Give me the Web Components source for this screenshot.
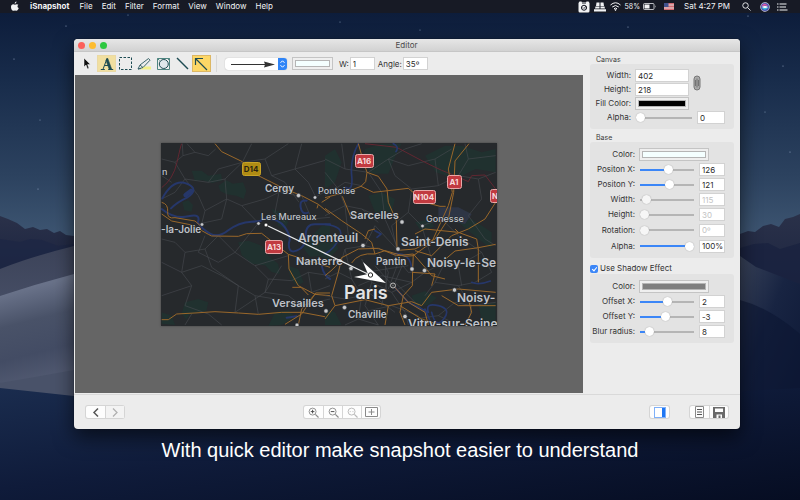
<!DOCTYPE html>
<html lang="en">
<head>
<meta charset="utf-8">
<title>iSnapshot Editor</title>
<style>
body { margin: 0; background: #0b1630; font-family: Inter, "Liberation Sans", sans-serif; }
</style>
</head>
<body>
<snap-desktop>
  <menu-bar slot="menu"></menu-bar>
  <editor-window heading="Editor">
    <tool-bar slot="tools"></tool-bar>
    <map-canvas slot="canvas"></map-canvas>
    <inspector-panel slot="inspector"></inspector-panel>
    <bottom-bar slot="footer"></bottom-bar>
  </editor-window>
  <span slot="caption">With quick editor make snapshot easier to understand</span>
</snap-desktop>

<script>
const define = (name, html, setup) => {
  const template = document.createElement('template');
  template.innerHTML = html;
  customElements.define(name, class extends HTMLElement {
    constructor() {
      super();
      this.attachShadow({ mode: 'open' }).append(template.content.cloneNode(true));
    }
    connectedCallback() { if (setup) setup(this, this.shadowRoot); }
  });
};

define('snap-wallpaper', `
<style>
:host { display: block; }
svg { display: block; width: 100%; height: 100%; }
</style>
<svg viewBox="0 0 800 500" preserveAspectRatio="none" aria-hidden="true">
  <defs>
    <linearGradient id="sky" x2="0" y2="1">
      <stop offset="0" stop-color="#0b1a38"/><stop offset=".3" stop-color="#182c4b"/>
      <stop offset=".65" stop-color="#2c425f"/><stop offset="1" stop-color="#47607c"/>
    </linearGradient>
    <linearGradient id="peak" x2="0" y2="1">
      <stop offset="0" stop-color="#2a3149"/><stop offset="1" stop-color="#141d3c"/>
    </linearGradient>
    <linearGradient id="duneA" x2="0" y2="1">
      <stop offset="0" stop-color="#3c4359"/><stop offset="1" stop-color="#565f78"/>
    </linearGradient>
    <linearGradient id="duneB" gradientUnits="userSpaceOnUse" x1="40" y1="285" x2="66" y2="390">
      <stop offset="0" stop-color="#697289"/><stop offset=".3" stop-color="#495268"/>
      <stop offset=".6" stop-color="#434c64"/><stop offset="1" stop-color="#596178"/>
    </linearGradient>
    <linearGradient id="right" x2=".6" y2="1">
      <stop offset="0" stop-color="#3a445b"/><stop offset=".4" stop-color="#182442"/><stop offset="1" stop-color="#0b1633"/>
    </linearGradient>
    <linearGradient id="ground" x2="1" y2="1">
      <stop offset="0" stop-color="#1a2c4e"/><stop offset=".45" stop-color="#0f1b3a"/><stop offset="1" stop-color="#060d22"/>
    </linearGradient>
  </defs>
  <rect width="800" height="270" fill="url(#sky)"/>
  <g fill="#8fa3c0">
    <circle cx="66" cy="26" r=".6"/><circle cx="14" cy="59" r=".6"/><circle cx="128" cy="15" r=".5"/>
    <circle cx="628" cy="27" r=".6"/><circle cx="748" cy="16" r=".6"/><circle cx="783" cy="66" r=".6"/>
    <circle cx="765" cy="112" r=".5"/><circle cx="38" cy="189" r=".6"/><circle cx="790" cy="152" r=".6"/>
    <circle cx="40" cy="120" r=".5"/><circle cx="420" cy="30" r=".5"/><circle cx="340" cy="22" r=".5"/>
  </g>
  <path d="M0 216L8 219 17 223 25 229 33 227 40 230 47 229 54 233 60 231 66 235 74 236V300H0Z" fill="url(#peak)"/>
  <path d="M0 239l20 3 10-3 12 1 16 6 16-2v40H0Z" fill="#1d2645" opacity=".7"/>
  <path d="M740 234l8-3 7 1 8-6 8-2 8 3 6-8 8-2 7-3v120h-60Z" fill="url(#peak)"/>
  <path d="M740 248l14-4 14-1 12 6 20-6v60h-60Z" fill="#18213f" opacity=".7"/>
  <path d="M0 269Q30 257 74 246V400H0Z" fill="url(#duneA)"/>
  <path d="M0 296Q36 284 74 274V400H0Z" fill="url(#duneB)"/>
  <path d="M740 256l16 11 44 17v216h-60Z" fill="url(#right)"/>
  <path d="M740 300q30 8 60 34v166h-60Z" fill="#0b1632" opacity=".6"/>
  <path d="M0 383Q36 377 74 370L300 350V400H0Z" fill="#495269"/>
  <path d="M0 388L74 396 400 410 800 388V500H0Z" fill="url(#ground)"/>
</svg>`);

define('snap-desktop', `
<style>
:host { display: flex; flex-direction: column; min-height: 100vh; position: relative; overflow: hidden; }
snap-wallpaper { position: absolute; inset: 0; }
main { position: relative; flex: 1; display: flex; margin: 26px 60px 0 74px; }
p { position: relative; margin: 0; padding: 9px 0 38px; text-align: center; color: #fff;
  font: 20px/24px "Liberation Sans", Arial, sans-serif; }
</style>
<snap-wallpaper></snap-wallpaper>
<slot name="menu"></slot>
<main><slot></slot></main>
<p><slot name="caption"></slot></p>`);

define('menu-bar', `
<style>
:host { position: relative; display: block; background: #171a25; color: #f2f3f5; }
nav { display: flex; align-items: center; height: 13px; padding: 0 12px 0 10px; }
button { all: unset; font-size: 8px; line-height: 13px; white-space: nowrap; margin-right: 9px; }
.app { font-weight: 700; margin: 0 10px; }
.gap { flex: 1; }
svg { display: block; fill: currentColor; }
.status { margin: 0; }
.status + .status { margin-left: 4px; }
.small { font-size: 7px; }
nav .status.battery { margin-left: 3px; }
nav .status.flag { margin-left: 8px; }
nav .status.clock { margin-left: 10px; }
nav .status.search { margin-left: 12px; }
nav .status.siri { margin-left: 9px; }
nav .status.list { margin-left: 7px; }
</style>
<nav aria-label="Menu bar">
  <button class="status" aria-label="Apple"><svg width="10" height="11" viewBox="0 0 20 22"><path d="M13 1c.2 2-1.600 4.200-3.600 4.300C9.100 3.300 11 1.200 13 1ZM16.800 7.400c-2.700 1.600-2.400 5.500.7 6.700-.8 2.400-2.600 5.600-4.500 5.600-1.300 0-1.700-.8-3.200-.8s-2 .8-3.200.8C4.300 19.700 2 15.400 2 11.800c0-3.300 2.100-5.400 4.400-5.400 1.400 0 2.500.9 3.500.9.900 0 2.200-1 4-1 1.100 0 2.200.4 2.900 1.100Z"/></svg></button>
  <button class="app">iSnapshot</button><button>File</button><button>Edit</button><button>Filter</button><button>Format</button><button>View</button><button>Window</button><button>Help</button>
  <span class="gap"></span>
  <button class="status" aria-label="iSnapshot"><svg width="12" height="12" viewBox="0 0 24 24"><path fill-rule="evenodd" d="M3 1h4l1 2h8l1-2h4l2 3v16q0 3-3 3H4q-3 0-3-3V4ZM8 5v1h8V5ZM12 7.500a6 6 0 1 0 .1 0Z"/><circle cx="12" cy="13.500" r="3.800"/><path d="M10 13l2 2 4-5" fill="none" stroke="#171a25" stroke-width="1.500"/></svg></button>
  <button class="status" aria-label="Displays"><svg width="12" height="10" viewBox="0 0 24 20"><path d="M5 1h6v7H4ZM13 1h6l1 7h-7ZM3 9h8v4H2ZM13 9h8l1 4h-9ZM0 14.500h24V19H0Z"/></svg></button>
  <button class="status" aria-label="Wi-Fi"><svg width="11" height="9" viewBox="0 0 22 18" style="fill:none" stroke="currentColor" stroke-width="2"><path d="M1 6q10-9 20 0M4.500 10q6.500-6 13 0M8 13.500q3-3 6 0"/><path d="M9.500 15.500h3L11 17Z"/></svg></button>
  <button class="status small">58%</button>
  <button class="status battery" aria-label="Battery"><svg width="13" height="7" viewBox="0 0 26 14"><rect x="1" y="1" width="21" height="12" rx="2" fill="none" stroke="currentColor" stroke-width="1.500"/><rect x="3" y="3" width="10" height="8"/><path d="M24 4.500q2 2.500 0 5Z"/></svg></button>
  <button class="status flag" aria-label="Input language"><svg width="10" height="7" viewBox="0 0 20 14"><path fill="#e7dede" d="M0 0h20v14H0Z"/><path stroke="#c8434c" stroke-width="1.500" d="M0 1h20M0 4h20M0 7h20M0 10h20M0 13h20"/><path fill="#41518c" d="M0 0h9v8H0Z"/></svg></button>
  <button class="status clock">Sat 4:27 PM</button>
  <button class="status search" aria-label="Spotlight"><svg width="9" height="9" viewBox="0 0 18 18" style="fill:none" stroke="currentColor" stroke-width="1.800"><circle cx="7" cy="7" r="5.500"/><path d="M11 11l6 6"/></svg></button>
  <button class="status siri" aria-label="Siri"><svg width="10" height="10" viewBox="0 0 20 20"><circle cx="10" cy="10" r="9.500" fill="#d5d7e6"/><circle cx="10" cy="10" r="8" fill="#4a55b0"/><path d="M3 9q5-10 13-1-6-2-13 1Z" fill="#e25aa5"/><path d="M3 11q7 9 14-1-6 2-14 1Z" fill="#39c3df"/><path d="M4 10q6-4 12 0-6 4-12 0Z" fill="#fff"/></svg></button>
  <button class="status list" aria-label="Notification Center"><svg width="11" height="8" viewBox="0 0 22 16"><path d="M0 1h3v2H0ZM5 1h14v2H5ZM0 7h3v2H0ZM5 7h13v2H5ZM0 13h3v2H0ZM5 13h16v2H5Z"/></svg></button>
</nav>`);

define('editor-window', `
<style>
:host { flex: 1; display: flex; flex-direction: column; min-width: 0; background: #ececec; color: #333;
  border-radius: 4px; overflow: hidden; box-shadow: 0 0 1px #000, 0 8px 20px #0009; }
header { display: grid; grid-template-columns: 1fr auto 1fr; align-items: center; height: 13px; padding: 0 5px 0 4px;
  background: linear-gradient(#e6e6e6, #d2d2d2); box-sizing: border-box; border-bottom: 1px solid #c6c6c6; }
h1 { margin: 0; font-size: 8px; line-height: 12px; font-weight: 400; color: #4a4a4a; }
.lights { display: flex; gap: 4px; }
.lights button { all: unset; width: 7px; height: 7px; border-radius: 50%; background: var(--c); }
.body { flex: 1; display: flex; }
.left { flex: 1; display: flex; flex-direction: column; min-width: 0; padding-left: 1px; }
slot[name=canvas] { display: flex; flex: 1; }
footer { border-top: 1px solid #d9d9d9; margin-top: 1px; }
</style>
<header>
  <div class="lights"><button aria-label="Close" style="--c:#fc605b"></button><button aria-label="Minimise" style="--c:#fdbc2f"></button><button aria-label="Zoom" style="--c:#2dc840"></button></div>
  <h1></h1>
</header>
<div class="body">
  <div class="left"><slot name="tools"></slot><slot name="canvas"></slot></div>
  <slot name="inspector"></slot>
</div>
<footer><slot name="footer"></slot></footer>`,
(host, root) => { root.querySelector('h1').textContent = host.getAttribute('heading'); });

define('color-well', `
<style>
:host { display: block; }
input { all: unset; display: block; box-sizing: border-box; width: 100%; height: 13px; padding: 2px;
  background: #efefef; border: 1px solid #c4c4c4; }
input::-webkit-color-swatch-wrapper { padding: 0; }
input::-webkit-color-swatch { border: 1px solid #b5b5b5; border-radius: 0; }
</style>
<input type="color">`,
(host, root) => {
  const input = root.querySelector('input');
  input.value = host.getAttribute('value');
  input.setAttribute('aria-label', host.getAttribute('label'));
});

const fieldStyle = `
input[type=text] { all: unset; box-sizing: border-box; width: 100%; min-width: 0; height: 13px; padding: 0 0 0 2px;
  border: 1px solid #d2d2d2; background: #fff; font-size: 8px; line-height: 11px; color: #2b2b2b; }
input[type=text]:disabled { color: #c3c3c3; }`;

define('tool-bar', `
<style>
:host { display: flex; align-items: center; height: 23px; padding-left: 3px; box-sizing: border-box; font-size: 8px; color: #333; }
.tools { display: flex; padding-right: 5px; border-right: 1px solid #d8d8d8; }
button { all: unset; display: grid; place-items: center; box-sizing: border-box; width: 19px; height: 17px; border: 1px solid transparent; }
button.lit { background: #f1dfa0; border-color: #ead9a4; }
button.on { background: #fdd766; border-color: #dcb765; }
svg { display: block; fill: none; stroke: #1d4b52; stroke-width: 1; }
.pick { display: grid; width: 62px; height: 12px; margin: 0 5px 0 8px; border-radius: 3px; background: #fff; overflow: hidden; box-shadow: 0 0 1px #999; }
.pick > * { grid-area: 1 / 1; }
select { all: unset; width: 62px; height: 12px; }
.pick svg { pointer-events: none; }
color-well { width: 41px; margin-right: 6px; }
label { margin-right: 1px; }
.num { width: 25px; margin-right: 3px; }
${fieldStyle}
</style>
<div class="tools" role="toolbar" aria-label="Drawing tools">
  <button aria-label="Select"><svg width="9" height="13" viewBox="0 0 9 13"><path d="M1 1v9l2-2 1.500 4 1.500-.7L4.600 7.600H7.500Z" style="fill:#111;stroke:#fff;stroke-width:.5"/></svg></button>
  <button class="lit" aria-label="Text"><svg width="14" height="14" viewBox="0 0 14 14"><path d="M7 1.500L3 12.300M4.600 8.500h4.600M.8 12.500h4M8.200 12.500h5"/><path d="M6.800 1.500h1L11.800 12.500H9.300L6 3.500Z" style="fill:#1d4b52;stroke-width:.6"/></svg></button>
  <button aria-label="Marquee"><svg width="15" height="15" viewBox="0 0 15 15"><rect x="1.500" y="1.500" width="12" height="12" stroke-dasharray="2.500 1.500"/></svg></button>
  <button aria-label="Highlighter"><svg width="15" height="14" viewBox="0 0 15 14"><path d="M3 12.500h11v-3H7Z" style="fill:#f2f08a;stroke:none"/><path d="M1 12l2-4 8.500-6.500L13 3.200 6 10.500ZM3 8l3 2.500M1 12l3-.5" style="stroke:#3c656b"/></svg></button>
  <button aria-label="Shapes"><svg width="15" height="14" viewBox="0 0 15 14"><path d="M13.500 1.500h-12v11h12ZM1.500 1.500l2 2M13.500 1.500l-1.500 1.500" style="stroke:#4f8580"/><circle cx="7.800" cy="7" r="4.500" style="fill:#dfe7ea"/></svg></button>
  <button aria-label="Line"><svg width="13" height="13" viewBox="0 0 13 13"><path d="M1 1l11 11" stroke-width="1.400"/></svg></button>
  <button class="on" aria-label="Arrow"><svg width="15" height="14" viewBox="0 0 15 14"><path d="M1.500 8V1.500H9M1.500 1.500L13 13" stroke-width="1.200"/></svg></button>
</div>
<div class="pick">
  <select aria-label="Arrow style"><option aria-label="Filled arrow"></option></select>
  <svg width="62" height="12" viewBox="0 0 62 12"><path d="M6 6.500h36" style="stroke:#333;stroke-width:1"/><path d="M39 3.500l11 3-11 3 1-3Z" style="fill:#333;stroke:none"/><path d="M53 0h9v12h-9Z" style="fill:#2f84f7;stroke:none"/><path d="M55.500 4.800l2-2 2 2M55.500 7.200l2 2 2-2" style="stroke:#fff"/></svg>
</div>
<color-well value="#f4ffff" label="Line colour"></color-well>
<label for="w">W:</label><div class="num"><input type="text" id="w" value="1"></div>
<label for="angle">Angle:</label><div class="num"><input type="text" id="angle" value="35º"></div>`);

define('map-canvas', `
<style>
:host { flex: 1; display: grid; place-items: center; background: #656565; }
svg { display: block; box-shadow: 0 0 2px #2228; font-family: Inter, "Noto Sans", sans-serif; font-weight: 600; }
.minor { fill: none; stroke: #484b50; stroke-width: 1.800; }
.major { fill: none; stroke: #9a672a; stroke-width: 3; stroke-linejoin: round; }
.water { fill: none; stroke: #26376a; stroke-width: 6; stroke-linejoin: round; stroke-linecap: round; }
.park { fill: #20312f; }
.a { font-size: 12px; } .b { font-size: 10px; } .c { font-size: 9px; } .d { font-size: 11px; }
.names { fill: #bfc2c8; stroke: #24272b; stroke-width: 1; paint-order: stroke; }
.names .c { font-weight: 500; }
.dots circle { fill: #c8cacc; stroke: #24272b; stroke-width: .6; }
.shield { font-size: 8px; font-weight: 700; text-anchor: middle; fill: #f7dada; }
</style>
<svg width="336" height="183" viewBox="0 0 336 183" role="img" aria-label="Map of the Paris region with an arrow pointing at Paris">
  <rect width="336" height="183" fill="#26292c"/>
  <g transform="translate(-6 -4) scale(.33333)">
    <g class="park">
      <path d="M110 95l30 0 20 15 38-6 4 20-30 8-30-8-22 2Z"/><path d="M190 140l24-16 20 10 30-4 10 25-8 25-22-10-30-4-18-10Z"/>
      <path d="M82 190l18-6 14 14-4 20-22-4Z"/><path d="M250 310l30-5 40 15 20 30 30 25 4 30-24-6-20-20-40-5-30-25Z"/>
      <path d="M90 490l40-10 30 10-6 26-50 10-10 16-14-18Z"/><path d="M20 520l30 10 10 28-40-4Z"/>
      <path d="M400 380l30 10 16 40-20 10-20-20Z"/><path d="M440 320l60-60 25 0v110l-30-20-30 4Z"/>
      <path d="M350 210l30 10 20 30-10 20-20-10Z"/><path d="M360 520l40-6 20 20-40 24-40 2Z"/>
    </g>
    <g class="minor">
      <path d="M20 60L60 70 84 50 120 40 160 50 182 30M84 50L82 14M120 40L96 14M60 70L90 120 130 170 150 215 140 255M20 180L60 160 90 120 160 130 210 120 262 70M210 120L215 180 150 215M215 180L260 200 310 252M260 200L330 180 372 160 430 170M262 70L290 14M262 70L330 60 400 14M330 60L350 110 390 130 432 190M350 110L420 90 525 60M420 90L440 14M420 90L460 130 482 174M482 174L525 150M20 300L60 310 90 340 80 400 110 440 90 500M20 370L80 400 140 380 200 410 250 440 240 520M90 340L150 330 190 290M150 330L170 385 250 440M190 290L240 340 300 380 340 420 330 460 240 520M240 340L310 252M300 380L400 350M340 420L410 425 460 400 525 410M330 460L400 470M110 440L20 470M90 500L160 525 200 558M250 440L300 470 360 480M400 470L440 500 525 480M380 380L330 460M215 180L200 240 130 255M20 110L50 130M372 160L360 220 390 250M160 130L190 90 262 70M150 290L130 340 190 370 240 340M440 170L470 240 525 235M460 400L470 460 525 440M300 470L310 525 M110 525L90 558"/>
      <path d="M20 146Q55 120 66 70T80 14" stroke="#6d2633" stroke-width="2.500"/>
    </g>
    <g class="water">
      <path d="M22 178Q55 118 95 134T96 176Q66 190 48 208M20 210Q60 242 100 232T128 252"/>
      <path d="M92 168l16-12" stroke-width="14"/>
      <path d="M128 250Q140 270 165 284T220 274 290 248 320 240Q370 235 390 265T402 310Q398 345 425 335T452 290 480 256H525"/>
      <path d="M455 185q-22-4-18 20t22 16M500 380q6 30 25 40M395 536l30-4" />
    </g>
    <g class="major">
      <path d="M180 14L200 38 262 68 290 100 350 130 390 150 440 170 490 196 525 225"/>
      <path d="M20 190Q40 195 38 218T60 236L120 246 136 260M20 225L50 246 110 258 160 286 170 291 250 292 275 284 320 283 335 295 400 346 525 385"/>
      <path d="M400 346L402 390 430 440 480 466 525 470M20 542H40L65 525 120 522 180 518 250 522 310 526 380 520 440 520 525 536M480 466L440 510 430 558M525 462L482 462 440 525 390 556M412 445H438L460 468"/>
      <path d="M490 196L486 208M500 190L525 174"/>
    </g>
  </g>
  <g transform="translate(164 -4) scale(.33333)">
    <g class="park">
      <path d="M120 30l50-16h60l-20 40-20 50-50 0-30-34Z"/><path d="M0 50l30-20 20 40-20 60-30 20Z"/><path d="M130 170l40-10 40 20-10 40-50 0Z"/>
      <path d="M300 50l60-30 50 0 60 20 42-10v70l-60-10-60 30-60-20Z"/><path d="M270 250l40-8 20 20-40 16Z"/><path d="M260 470l40-14 36 20-26 22-40 4Z"/>
      <path d="M0 510l30 10 20 38H0Z"/><path d="M400 250l40-10 60 40 0 50-40-30Z"/><path d="M460 500l52-10v60h-40Z"/><path d="M0 330l30-30 10 30-40 40Z"/>
    </g>
    <path d="M340 205h60l40 20-20 30-80-16Z" fill="#2e3545"/>
    <g class="minor">
      <path d="M0 60L60 90 130 100 190 60 240 30 290 14M130 100L170 160 180 240 220 330M0 170L60 130 110 140M60 90L50 14M190 60L210 110 260 150 340 140 400 110 460 120 512 100M340 140L330 60 380 30M330 60L250 80 190 60M400 110L430 60 420 14M430 60L512 50M460 120L470 180 430 230 480 300 512 320M260 150L250 220 290 260 350 240M250 220L200 260 215 330M0 230L60 200 110 210 160 250M60 200L70 290M180 240L110 210 M0 420L40 400 80 420 110 470 100 540M40 400L60 330 120 320 200 340 250 400 300 400 360 370 400 380 470 340M110 360L140 430 200 460 260 430 300 400M140 430L120 500 160 558M200 460L240 520 250 558M300 470L330 430 400 440 440 500 512 490M330 430L360 370M400 380L410 440M440 500L430 558M470 340L500 400 450 430 400 440M60 330L80 420M120 320L150 260 215 330M340 530L390 490 440 500M0 470L60 480 110 470M0 100L40 150 60 200M290 260L320 360 360 370M350 240L400 290 470 340M60 558L100 540 160 558M180 360L185 460M150 380L230 470M220 370L190 450M100 440L170 410 260 430M130 460L210 520M160 340L190 400 170 500M240 360L210 430 300 520M270 540L340 530 400 558M120 400L250 380M110 520L200 500 280 530"/>
      <path d="M120 14L215 25 300 70 350 94 390 110 430 128 440 110 480 108 512 150" stroke="#6d2633" stroke-width="2.500"/>
    </g>
    <g class="water">
      <path d="M100 14Q75 60 80 110T62 145M205 14q18 8 8 24" stroke-width="5"/>
      <path d="M0 256Q60 262 44 296T0 345M150 275l18 10-12 10M200 345q60-8 60 50" stroke-width="5"/>
      <path d="M205 440L250 490 310 520Q300 490 340 500T356 540 320 520M440 430q20 10 56-4M300 510l20 48" stroke-width="5"/>
    </g>
    <g class="major">
      <path d="M100 14L116 70 126 100 122 128 108 142 60 160 0 176M126 100L160 112 186 150 190 190 214 245 216 330M108 142L145 160 250 148 300 190 345 202H362"/>
      <path d="M0 208L50 245 110 285 140 310 150 345 180 335 240 352 265 350 320 310 370 200 382 160 370 90 390 14M432 14L390 66 386 160 370 240 330 300 270 330 220 334"/>
      <path d="M52 172L80 240M512 190L480 240 430 270 380 290 320 350 270 335M270 285L300 270 400 280 455 300 460 330 460 430M512 316L460 326 390 336 350 370"/>
      <path d="M0 410Q40 380 50 356L100 330 160 328 215 350 265 345 300 385 320 410 360 420M265 345Q262 400 262 440L235 470 225 520 240 558M50 356L40 400 20 470 30 500 0 540M30 500L120 482 190 500 260 488 290 500 320 460 400 450 512 460M80 372Q100 340 150 345M205 440L250 490 300 520 310 558M190 500L180 558M225 500L290 540 345 558M262 400L330 405 320 440M120 300L130 275 150 270M390 270L400 280 M430 480L440 520 420 558M350 470L400 500 512 500"/>
    </g>
  </g>
  <g class="dots">
    <circle cx="137.500" cy="52.500" r="2.200"/><circle cx="154" cy="54.500" r="1.800"/><circle cx="41" cy="81.500" r="1.800"/><circle cx="97.500" cy="80.500" r="1.800"/>
    <circle cx="241" cy="79" r="2.200"/><circle cx="261.500" cy="83" r="1.800"/><circle cx="202" cy="102.500" r="2.200"/><circle cx="237" cy="106" r="2.200"/>
    <circle cx="190" cy="125.500" r="2.200"/><circle cx="251" cy="126" r="2.200"/><circle cx="263.500" cy="127.500" r="2.200"/><circle cx="293.500" cy="147" r="2.200"/>
    <circle cx="165" cy="168" r="2.200"/><circle cx="183.500" cy="164.500" r="2.200"/><circle cx="244" cy="173.500" r="2.200"/><circle cx="136" cy="182" r="2"/>
    <circle cx="232" cy="142.500" r="2.500" style="fill:#333;stroke:#bbb;stroke-width:1"/><circle cx="232" cy="142.500" r=".8"/>
  </g>
  <g class="names">
    <text class="c" x="1" y="32">n</text><text class="b" x="0" y="90">-la-Jolie</text>
    <text class="b" x="104" y="49">Cergy</text><text class="c" x="157" y="51">Pontoise</text>
    <text class="c" x="100" y="77">Les Mureaux</text><text class="d" x="189" y="76">Sarcelles</text>
    <text class="c" x="265" y="79">Gonesse</text><text class="a" x="137" y="99">Argenteuil</text>
    <text class="a" x="240" y="103">Saint-Denis</text><text class="d" x="135" y="122">Nanterre</text>
    <text class="b" x="215" y="122">Pantin</text><text class="a" x="266" y="124">Noisy-le-Se</text>
    <text x="183" y="156" style="font-size:18px;fill:#e2e3e5">Paris</text>
    <text class="d" x="111" y="164">Versailles</text><text class="b" x="187" y="175">Chaville</text>
    <text class="a" x="296" y="159">Noisy-</text><text class="a" x="247" y="185">Vitry-sur-Seine</text>
  </g>
  <g fill="#c13a40" stroke="#e7a9a9">
    <rect x="194.500" y="11.500" width="18" height="13" rx="2"/><rect x="286.500" y="32.500" width="14" height="13" rx="2"/>
    <rect x="252.500" y="47.500" width="22" height="13" rx="2"/><rect x="104.500" y="97.500" width="17" height="13" rx="2"/>
    <rect x="329.500" y="46.500" width="20" height="13" rx="2"/>
  </g>
  <rect x="81.500" y="19.500" width="18" height="13" rx="2" fill="#b08c14" stroke="#c8a426"/>
  <g class="shield">
    <text x="203" y="21">A16</text><text x="293" y="42">A1</text><text x="263" y="57">N104</text><text x="113" y="107">A13</text><text x="334" y="56">N</text>
    <text x="90" y="29" style="fill:#2a2410">D14</text>
  </g>
  <g>
    <path d="M105 82L209 132" stroke="#e9eaea" stroke-width="1.300"/>
    <path d="M202 119L225 140 193 134 207 131Z" fill="#fff"/>
    <circle cx="105" cy="82" r="2" fill="#fff" stroke="#111" stroke-width=".8"/>
    <circle cx="209.500" cy="132" r="2.200" fill="#fff" stroke="#222" stroke-width="1"/>
  </g>
</svg>`);

define('group-box', `
<style>
:host { display: block; }
fieldset { margin: 0; border: 0; padding: 0; min-width: 0; }
legend { padding: 0 0 0 6px; font-size: 7px; line-height: 9px; color: #3c3c3c; }
slot[name=title] { display: block; }
.box { background: #e3e3e3; border-radius: 3px; padding: 5px 9px 4px 0; }
</style>
<fieldset><legend></legend><slot name="title"></slot><div class="box"><slot></slot></div></fieldset>`,
(host, root) => {
  const heading = host.getAttribute('heading');
  const legend = root.querySelector('legend');
  if (heading) legend.textContent = heading; else legend.remove();
});

define('value-row', `
<style>
:host { display: grid; grid-template-columns: 45px 1fr 26px; align-items: center; column-gap: 5px; height: 15px; }
:host([narrow]) { grid-template-columns: 41px 1fr 28px; }
:host([tall]) { height: 16px; }
label { text-align: right; white-space: nowrap; font-size: 8px; line-height: 13px; color: #333; justify-self: end; }
input[type=range] { all: unset; width: 100%; height: 9px; min-width: 0;
  background: linear-gradient(#3b86f7, #3b86f7) left center / var(--fill) 2px no-repeat, linear-gradient(#b5b5b5, #b5b5b5) center / 100% 2px no-repeat; }
input[type=range]::-webkit-slider-thumb { -webkit-appearance: none; width: 9px; height: 9px; border-radius: 50%; background: #fff; box-shadow: 0 0 1px #8a8a8a; }
input[type=range]:disabled { --fill: 0; }
input[type=range]:disabled::-webkit-slider-thumb { background: #f6f6f6; }
${fieldStyle}
</style>
<label for="slider"></label><input type="range" id="slider"><input type="text">`,
(host, root) => {
  const [label, range, field] = root.querySelectorAll('label, input');
  const name = host.getAttribute('label');
  label.textContent = name + ':';
  range.value = host.getAttribute('at');
  range.disabled = field.disabled = host.hasAttribute('disabled');
  if (!range.disabled) range.style.setProperty('--fill', range.value + '%');
  field.value = host.getAttribute('value');
  field.setAttribute('aria-label', name + ' value');
});

define('inspector-panel', `
<style>
:host { flex: 0 0 144px; padding: 3px 6px 0 7px; font-size: 8px; color: #333; }
.canvas { display: grid; grid-template-columns: 41px 54px 20px; column-gap: 4px; row-gap: 1px; align-items: center; }
label { justify-self: end; line-height: 13px; white-space: nowrap; }
.chain { all: unset; grid-row: 1 / 3; grid-column: 3; justify-self: start; }
.chain svg { display: block; }
.swatch { display: grid; grid-template-columns: 45px 70px; column-gap: 4px; align-items: center; height: 15px; }
.base { margin-top: 4px; }
.check { display: flex; align-items: center; gap: 2px; margin: 6px 0 1px; height: 9px; }
.check label { line-height: 9px; }
.check input { all: unset; width: 8px; height: 8px; border-radius: 2px; background: #3b86f7; display: grid; place-items: center; }
.check input:checked::before { content: ""; width: 2px; height: 4px; border: solid #fff; border-width: 0 1px 1px 0; transform: rotate(40deg); }
${fieldStyle}
</style>
<group-box heading="Canvas">
  <div class="canvas">
    <label for="cw">Width:</label><input type="text" id="cw" value="402">
    <button class="chain" aria-label="Link width and height"><svg width="8" height="16" viewBox="0 0 8 16"><rect x="1" y="1" width="6" height="14" rx="3" fill="#aaa" stroke="#777"/><path d="M4 3.500v9M2.500 5v6M5.500 5v6" stroke="#666" stroke-width=".8"/></svg></button>
    <label for="ch">Height:</label><input type="text" id="ch" value="218">
    <label>Fill Color:</label><color-well value="#000000" label="Fill Color"></color-well>
  </div>
  <value-row narrow label="Alpha" at="0" value="0"></value-row>
</group-box>
<group-box class="base" heading="Base">
  <div class="swatch"><label>Color:</label><color-well value="#f4ffff" label="Color"></color-well></div>
  <value-row label="Positon X" at="53" value="126"></value-row>
  <value-row label="Positon Y" at="55" value="121"></value-row>
  <value-row label="Width" at="5" value="115" disabled></value-row>
  <value-row label="Height" at="0" value="30" disabled></value-row>
  <value-row tall label="Rotation" at="0" value="0º" disabled></value-row>
  <value-row tall label="Alpha" at="100" value="100%"></value-row>
</group-box>
<group-box>
  <div slot="title" class="check"><input type="checkbox" id="shadow" checked><label for="shadow">Use Shadow Effect</label></div>
  <div class="swatch"><label>Color:</label><color-well value="#7f7f7f" label="Shadow Color"></color-well></div>
  <value-row label="Offset X" at="52" value="2"></value-row>
  <value-row label="Offset Y" at="47" value="-3"></value-row>
  <value-row label="Blur radius" at="11" value="8"></value-row>
</group-box>`);

define('bottom-bar', `
<style>
:host { display: flex; align-items: center; height: 34px; padding: 0 12px; }
.group { display: flex; background: #fdfdfd; border-radius: 2px; box-shadow: 0 0 0 1px #d5d5d5; }
button { all: unset; display: grid; place-items: center; box-sizing: border-box; width: 19px; height: 12px; }
button + button { border-left: 1px solid #d5d5d5; }
button:disabled { background: #f3f3f3; }
svg { display: block; fill: none; stroke: #8a8a8a; }
.s2 { flex: 2; } .s3 { flex: 3; } .s0 { flex: 0 0 21px; }
</style>
<div class="group">
  <button aria-label="Back"><svg width="8" height="11" viewBox="0 0 8 11"><path d="M6 1.500L2 5.500l4 4" style="stroke:#555;stroke-width:1.500"/></svg></button>
  <button aria-label="Forward" disabled><svg width="8" height="11" viewBox="0 0 8 11"><path d="M2 1.500l4 4-4 4" style="stroke:#b0b0b0;stroke-width:1.300"/></svg></button>
</div>
<span class="s2"></span>
<div class="group">
  <button aria-label="Zoom in"><svg width="11" height="11" viewBox="0 0 12 12"><circle cx="5" cy="5" r="3.800"/><path d="M8 8l3.500 3.500" stroke-width="1.300"/><path d="M5 3v4M3 5h4" style="stroke:#444"/></svg></button>
  <button aria-label="Zoom out"><svg width="11" height="11" viewBox="0 0 12 12"><circle cx="5" cy="5" r="3.800"/><path d="M8 8l3.500 3.500" stroke-width="1.300"/><path d="M3 5h4" style="stroke:#444"/></svg></button>
  <button aria-label="Actual size"><svg width="11" height="11" viewBox="0 0 12 12" opacity=".6"><circle cx="5" cy="5" r="3.800"/><path d="M8 8l3.500 3.500" stroke-width="1.300"/><path d="M3 5h1M6 5h1"/></svg></button>
  <button aria-label="Fit"><svg width="13" height="10" viewBox="0 0 13 10"><path d="M.5.500h12v9H.5ZM6.500 2v6M3.500 5h6"/></svg></button>
</div>
<span class="s3"></span>
<div class="group"><button aria-label="Toggle inspector"><svg width="12" height="11" viewBox="0 0 12 11"><rect x=".5" y=".5" width="11" height="10" style="fill:#fff;stroke:#7fb0f8"/><path d="M8 1h3v9H8Z" style="fill:#1f77f4;stroke:none"/></svg></button></div>
<span class="s0"></span>
<div class="group">
  <button aria-label="List"><svg width="9" height="12" viewBox="0 0 9 12"><path d="M.5.500h8v11h-8Z"/><path d="M2 3.500h5M2 6h5M2 8.500h5" style="stroke:#555"/></svg></button>
  <button aria-label="Save"><svg width="12" height="11" viewBox="0 0 12 11"><path fill-rule="evenodd" d="M0 0h12v11H0ZM2 1.500v3.500h8V1.500ZM3.500 7.500V11h2V8.500h2V11h1.500V7.500Z" style="fill:#6a6a6a;stroke:none"/></svg></button>
</div>`);
</script>
</body>
</html>
